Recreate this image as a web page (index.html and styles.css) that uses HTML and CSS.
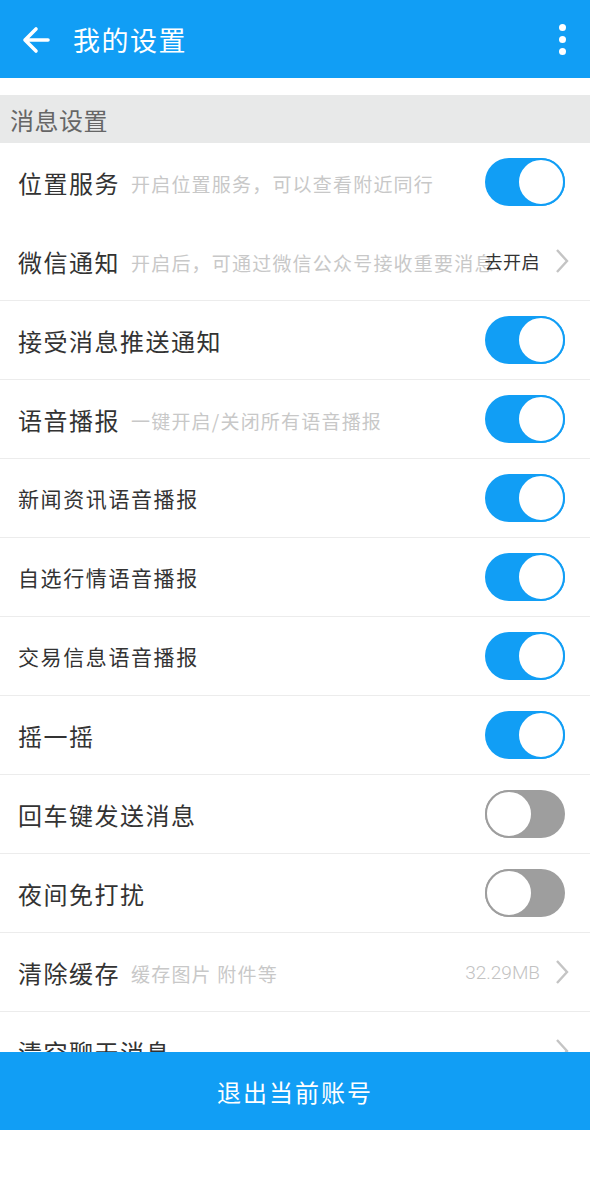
FILE: index.html
```html
<!DOCTYPE html>
<html>
<head>
<meta charset="utf-8">
<link rel="stylesheet" href="styles.css">
</head>
<body>
<div class="topbar">
  <svg class="back" width="30" height="28" viewBox="0 0 30 28">
    <path d="M27 14H4M15 3L4 14l11 11" fill="none" stroke="#fff" stroke-width="3.6" stroke-linecap="round" stroke-linejoin="round"/>
  </svg>
  <div class="title">我的设置</div>
  <div class="more"><i></i><i></i><i></i></div>
</div>

<div class="content">
  <div class="section-title">消息设置</div>

  <div class="row first">
    <span class="label">位置服务</span>
    <span class="hint">开启位置服务，可以查看附近同行</span>
    <span class="switch on"></span>
  </div>
  <div class="row link">
    <span class="label">微信通知</span>
    <span class="hint">开启后，可通过微信公众号接收重要消息</span>
    <span class="value dark">去开启</span>
    <svg class="chev" width="14" height="26" viewBox="0 0 14 26"><path d="M2 2l10 11L2 24" fill="none" stroke="#c4c4c4" stroke-width="2.4"/></svg>
  </div>
  <div class="row">
    <span class="label">接受消息推送通知</span>
    <span class="hint"></span>
    <span class="switch on"></span>
  </div>
  <div class="row">
    <span class="label">语音播报</span>
    <span class="hint">一键开启/关闭所有语音播报</span>
    <span class="switch on"></span>
  </div>
  <div class="row">
    <span class="label small">新闻资讯语音播报</span>
    <span class="hint"></span>
    <span class="switch on"></span>
  </div>
  <div class="row">
    <span class="label small">自选行情语音播报</span>
    <span class="hint"></span>
    <span class="switch on"></span>
  </div>
  <div class="row">
    <span class="label small">交易信息语音播报</span>
    <span class="hint"></span>
    <span class="switch on"></span>
  </div>
  <div class="row">
    <span class="label">摇一摇</span>
    <span class="hint"></span>
    <span class="switch on"></span>
  </div>
  <div class="row">
    <span class="label">回车键发送消息</span>
    <span class="hint"></span>
    <span class="switch"></span>
  </div>
  <div class="row">
    <span class="label">夜间免打扰</span>
    <span class="hint"></span>
    <span class="switch"></span>
  </div>
  <div class="row link">
    <span class="label">清除缓存</span>
    <span class="hint">缓存图片 附件等</span>
    <span class="value num">32.29MB</span>
    <svg class="chev" width="14" height="26" viewBox="0 0 14 26"><path d="M2 2l10 11L2 24" fill="none" stroke="#c4c4c4" stroke-width="2.4"/></svg>
  </div>
  <div class="row link">
    <span class="label">清空聊天消息</span>
    <span class="hint"></span>
    <svg class="chev" width="14" height="26" viewBox="0 0 14 26"><path d="M2 2l10 11L2 24" fill="none" stroke="#c4c4c4" stroke-width="2.4"/></svg>
  </div>
</div>

<div class="logout">退出当前账号</div>
<div class="footer"></div>
</body>
</html>
```

FILE: styles.css
```css
html, body {
    margin: 0;
    padding: 0;
}

body {
    width: 590px;
    height: 1200px;
    display: flex;
    flex-direction: column;
    background: #fff;
    font-family: "Noto Sans CJK SC", "Noto Sans", sans-serif;
    color: #333;
    overflow: hidden;
}

.topbar {
    height: 78px;
    flex: none;
    background: #119ef5;
    display: flex;
    align-items: center;
    padding: 0 24px 0 21px;
}
.back {
    display: block;
    margin-top: 1px;
}
.title {
    flex: 1;
    color: #fff;
    font-size: 27px;
    margin-left: 22px;
    letter-spacing: 1.5px;
}
.more {
    display: flex;
    flex-direction: column;
    gap: 5px;
}
.more i {
    width: 7px;
    height: 7px;
    border-radius: 50%;
    background: #fff;
}

.content {
    flex: 1;
    overflow: hidden;
    padding-top: 17px;
}

.section-title {
    height: 48px;
    background: #e8e9e9;
    color: #666;
    font-size: 24px;
    padding-left: 10px;
    letter-spacing: 0.5px;
    display: flex;
    align-items: center;
}

.row {
    height: 79px;
    box-sizing: border-box;
    border-bottom: 1px solid #ececec;
    display: flex;
    align-items: center;
    padding: 0 25px 0 18px;
}
.row.first {
    border-bottom-color: transparent;
}
.row.link {
    padding-right: 21px;
}

.label {
    flex: none;
    font-size: 24px;
    color: #333;
    letter-spacing: 1.5px;
}
.label.small {
    font-size: 21px;
    letter-spacing: 1.6px;
}
.hint {
    flex: 1;
    min-width: 0;
    white-space: nowrap;
    font-size: 19px;
    color: #c8c8c8;
    margin-left: 11px;
    margin-top: 2px;
    letter-spacing: 1.2px;
}

.value {
    flex: none;
    font-size: 18px;
    margin-right: 15px;
    position: relative;
}
.value.dark {
    color: #333;
    letter-spacing: 0.5px;
}
.value.num {
    font-family: Roboto, "Noto Sans", sans-serif;
    font-weight: 300;
    font-size: 19px;
    color: #c2c2c2;
}

.chev {
    flex: none;
    display: block;
}

.switch {
    flex: none;
    width: 80px;
    height: 48px;
    border-radius: 24px;
    background: #9e9e9e;
    box-sizing: border-box;
    position: relative;
}
.switch::after {
    content: "";
    position: absolute;
    top: 0;
    left: 0;
    width: 48px;
    height: 48px;
    box-sizing: border-box;
    border-radius: 50%;
    background: #fff;
    border: 2px solid #9e9e9e;
}
.switch.on {
    background: #119ef5;
}
.switch.on::after {
    left: auto;
    right: 0;
    border-color: #119ef5;
}

.logout {
    height: 78px;
    flex: none;
    background: #119ef5;
    color: #fff;
    font-size: 24px;
    letter-spacing: 2px;
    display: flex;
    align-items: center;
    justify-content: center;
}
.footer {
    height: 70px;
    flex: none;
    background: #fff;
}
```
